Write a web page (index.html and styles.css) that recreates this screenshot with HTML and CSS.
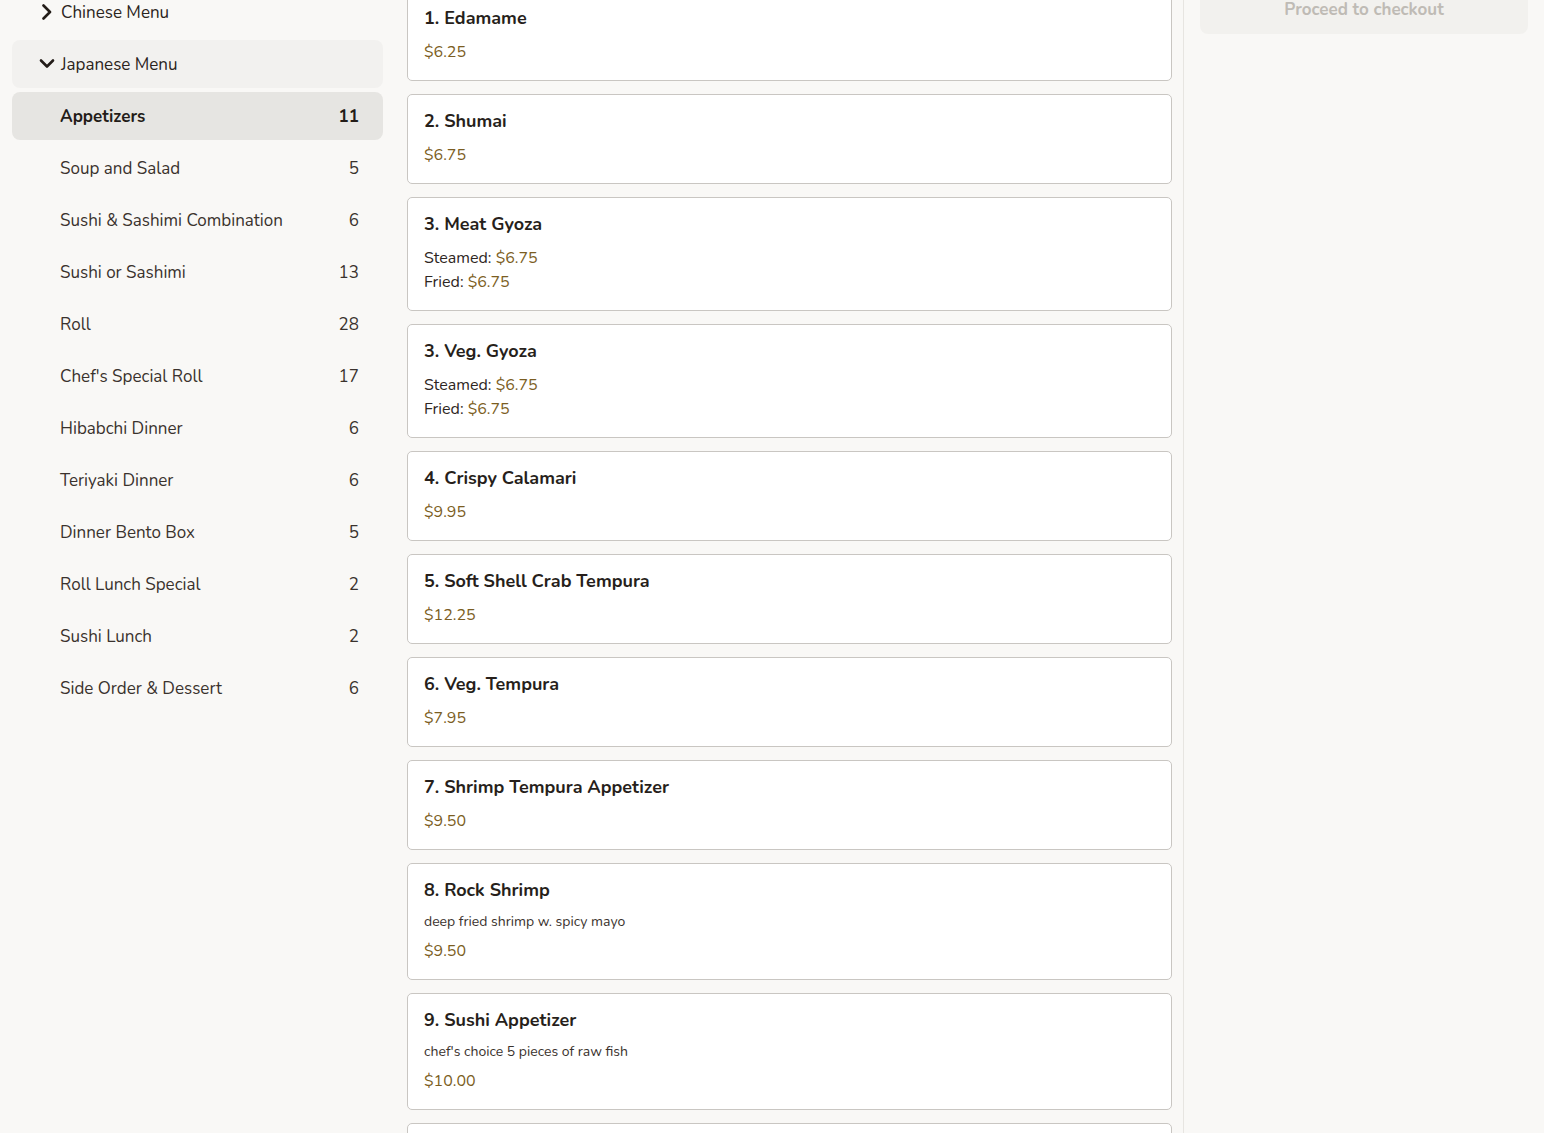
FILE: index.html
```html
<!DOCTYPE html>
<html lang="en">
<head>
<meta charset="utf-8">
<title>Menu</title>
<link rel="stylesheet" href="styles.css">
</head>
<body>
<div class="page">
  <aside class="sidebar">
    <div class="group-head">
      <svg class="chev" viewBox="0 0 16 16" width="16" height="16"><polyline points="4.5,1.5 11,8 4.5,14.5" /></svg>
      <span>Chinese Menu</span>
    </div>
    <div class="group-head open">
      <svg class="chev" viewBox="0 0 16 16" width="16" height="16"><polyline points="2,4.5 8,10.5 14,4.5" /></svg>
      <span>Japanese Menu</span>
    </div>
    <div class="cat active"><span>Appetizers</span><span>11</span></div>
    <div class="cat"><span>Soup and Salad</span><span>5</span></div>
    <div class="cat"><span>Sushi &amp; Sashimi Combination</span><span>6</span></div>
    <div class="cat"><span>Sushi or Sashimi</span><span>13</span></div>
    <div class="cat"><span>Roll</span><span>28</span></div>
    <div class="cat"><span>Chef's Special Roll</span><span>17</span></div>
    <div class="cat"><span>Hibabchi Dinner</span><span>6</span></div>
    <div class="cat"><span>Teriyaki Dinner</span><span>6</span></div>
    <div class="cat"><span>Dinner Bento Box</span><span>5</span></div>
    <div class="cat"><span>Roll Lunch Special</span><span>2</span></div>
    <div class="cat"><span>Sushi Lunch</span><span>2</span></div>
    <div class="cat"><span>Side Order &amp; Dessert</span><span>6</span></div>
  </aside>

  <main class="items">
    <div class="card"><div class="title">1. Edamame</div><div class="price">$6.25</div></div>
    <div class="card"><div class="title">2. Shumai</div><div class="price">$6.75</div></div>
    <div class="card"><div class="title">3. Meat Gyoza</div>
      <div class="opts"><div>Steamed: <span class="gold">$6.75</span></div><div>Fried: <span class="gold">$6.75</span></div></div></div>
    <div class="card"><div class="title">3. Veg. Gyoza</div>
      <div class="opts"><div>Steamed: <span class="gold">$6.75</span></div><div>Fried: <span class="gold">$6.75</span></div></div></div>
    <div class="card"><div class="title">4. Crispy Calamari</div><div class="price">$9.95</div></div>
    <div class="card"><div class="title">5. Soft Shell Crab Tempura</div><div class="price">$12.25</div></div>
    <div class="card"><div class="title">6. Veg. Tempura</div><div class="price">$7.95</div></div>
    <div class="card"><div class="title">7. Shrimp Tempura Appetizer</div><div class="price">$9.50</div></div>
    <div class="card"><div class="title">8. Rock Shrimp</div><div class="desc">deep fried shrimp w. spicy mayo</div><div class="price tight">$9.50</div></div>
    <div class="card"><div class="title">9. Sushi Appetizer</div><div class="desc">chef's choice 5 pieces of raw fish</div><div class="price tight">$10.00</div></div>
    <div class="card card-next"></div>
  </main>

  <aside class="cart">
    <button class="checkout">Proceed to checkout</button>
  </aside>
</div>
</body>
</html>
```
FILE: styles.css
```css
* { box-sizing: border-box; }
html, body { margin: 0; padding: 0; height: 100%; overflow: hidden; }
body {
  background: #f9f8f6;
  font-family: "Nunito", "Lato", "Noto Sans", sans-serif;
  color: #2b2420;
}
.page {
  display: grid;
  grid-template-columns: 395px 789px 1fr;
  margin-top: -24px;
  min-height: calc(100% + 24px);
}
.sidebar {
  padding: 12px 12px 0 12px;
  display: flex;
  flex-direction: column;
  gap: 4px;
}
.group-head {
  height: 48px;
  display: flex;
  align-items: center;
  gap: 6px;
  padding-left: 27px;
  font-size: 17px;
  color: #2b2420;
  border-radius: 8px;
}
.group-head.open { background: #f2f1ef; }
.chev { fill: none; stroke: #231c18; stroke-width: 2.6; stroke-linecap: round; stroke-linejoin: round; }
.cat {
  height: 48px;
  display: flex;
  align-items: center;
  justify-content: space-between;
  padding: 0 24px 0 48px;
  font-size: 17px;
  color: #3a322d;
  border-radius: 8px;
}
.cat.active { background: #e6e5e2; font-weight: 700; color: #231c18; }

.items {
  padding: 15px 11px 0 12px;
  border-right: 1px solid #e7e5e1;
  display: flex;
  flex-direction: column;
  gap: 13px;
}
.card {
  background: #fff;
  border: 1px solid #c9c6c2;
  border-radius: 5px;
  padding: 14px 16px 16px;
}
.card-next { min-height: 90px; }
.title {
  font-size: 18px;
  font-weight: 700;
  line-height: 24px;
  color: #271f1b;
}
.price {
  margin-top: 10px;
  font-size: 16px;
  line-height: 24px;
  color: #7b5d22;
}
.price.tight { margin-top: 7px; }
.opts {
  margin-top: 10px;
  font-size: 16px;
  line-height: 24px;
  color: #2e2622;
}
.gold { color: #7b5d22; }
.desc {
  margin-top: 10px;
  font-size: 14px;
  line-height: 20px;
  color: #3a322d;
}
.cart { padding: 9px 16px 0; }
.checkout {
  width: 100%;
  height: 49px;
  border: none;
  border-radius: 8px;
  background: #f2f1ee;
  color: #bfbbb5;
  font-family: inherit;
  font-size: 17px;
  font-weight: 700;
}
```
